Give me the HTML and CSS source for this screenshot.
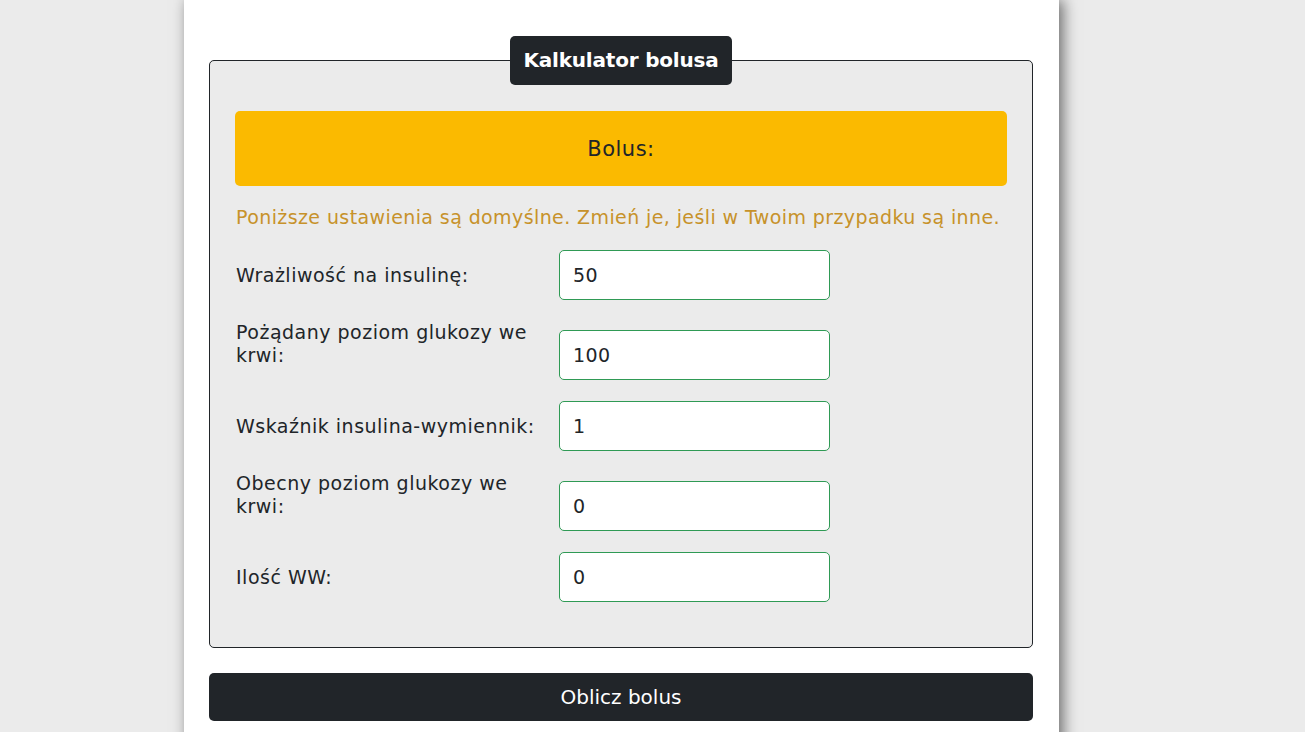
FILE: index.html
```html
<!DOCTYPE html>
<html lang="pl">
<head>
<meta charset="utf-8">
<title>Kalkulator bolusa</title>
<link rel="stylesheet" href="styles.css">
</head>
<body>
<main class="page">
  <form class="calc">
    <fieldset class="calc-box">
      <legend class="calc-title">Kalkulator bolusa</legend>
      <div class="result">Bolus:</div>
      <p class="note">Poniższe ustawienia są domyślne. Zmień je, jeśli w Twoim przypadku są inne.</p>
      <div class="row">
        <label class="row-label" for="f1">Wrażliwość na insulinę:</label>
        <input class="row-input" id="f1" type="text" value="50">
      </div>
      <div class="row">
        <label class="row-label" for="f2">Pożądany poziom glukozy we krwi:</label>
        <input class="row-input" id="f2" type="text" value="100">
      </div>
      <div class="row">
        <label class="row-label" for="f3">Wskaźnik insulina-wymiennik:</label>
        <input class="row-input" id="f3" type="text" value="1">
      </div>
      <div class="row">
        <label class="row-label" for="f4">Obecny poziom glukozy we krwi:</label>
        <input class="row-input" id="f4" type="text" value="0">
      </div>
      <div class="row">
        <label class="row-label" for="f5">Ilość WW:</label>
        <input class="row-input" id="f5" type="text" value="0">
      </div>
    </fieldset>
    <button class="submit" type="button">Oblicz bolus</button>
  </form>
</main>
</body>
</html>
```
FILE: styles.css
```css
html, body {
  margin: 0;
  padding: 0;
}
body {
  background: #ebebeb;
  font-family: "DejaVu Sans", sans-serif;
  color: #212529;
  min-height: 732px;
  overflow: hidden;
}
.page {
  width: 875px;
  margin-left: 184px;
  background: #fff;
  min-height: 800px;
  box-shadow: 4px 0 14px rgba(0, 0, 0, 0.55);
  padding: 36px 26px 0 25px;
  box-sizing: border-box;
}
.calc-box {
  margin: 0;
  border: 1px solid #212529;
  border-radius: 5px;
  background: #ebebeb;
  padding: 26px 25px 24px 25px;
  min-width: 0;
}
.calc-title {
  margin: 0 auto;
  background: #212529;
  color: #fff;
  font-weight: bold;
  font-size: 20px;
  letter-spacing: -0.2px;
  line-height: 49px;
  height: 49px;
  padding: 0 13px;
  border-radius: 5px;
  box-sizing: border-box;
}
.result {
  background: #fbba00;
  border-radius: 5px;
  height: 75px;
  display: flex;
  align-items: center;
  justify-content: center;
  font-size: 21px;
  letter-spacing: 0.5px;
  color: #212529;
  margin-bottom: 19px;
}
.note {
  margin: 0 0 21px;
  padding-left: 1px;
  font-size: 19px;
  letter-spacing: 0.4px;
  line-height: 24px;
  color: #c7922a;
}
.row {
  display: flex;
  align-items: flex-end;
  margin-bottom: 21px;
}
.row-label {
  flex: 0 0 324px;
  box-sizing: border-box;
  padding: 0 12px 13px 1px;
  font-size: 19px;
  letter-spacing: 0.5px;
  line-height: 23px;
}
.row-input {
  width: 271px;
  height: 50px;
  box-sizing: border-box;
  border: 1px solid #2f9a55;
  border-radius: 5px;
  background: #fff;
  padding: 0 13px;
  font-family: inherit;
  font-size: 19px;
  letter-spacing: 0.4px;
  color: #212529;
  outline: none;
}
.submit {
  display: block;
  width: 100%;
  margin-top: 25px;
  height: 48px;
  border: 0;
  border-radius: 5px;
  background: #212529;
  color: #fff;
  font-family: inherit;
  font-size: 20px;
  cursor: pointer;
}
```
